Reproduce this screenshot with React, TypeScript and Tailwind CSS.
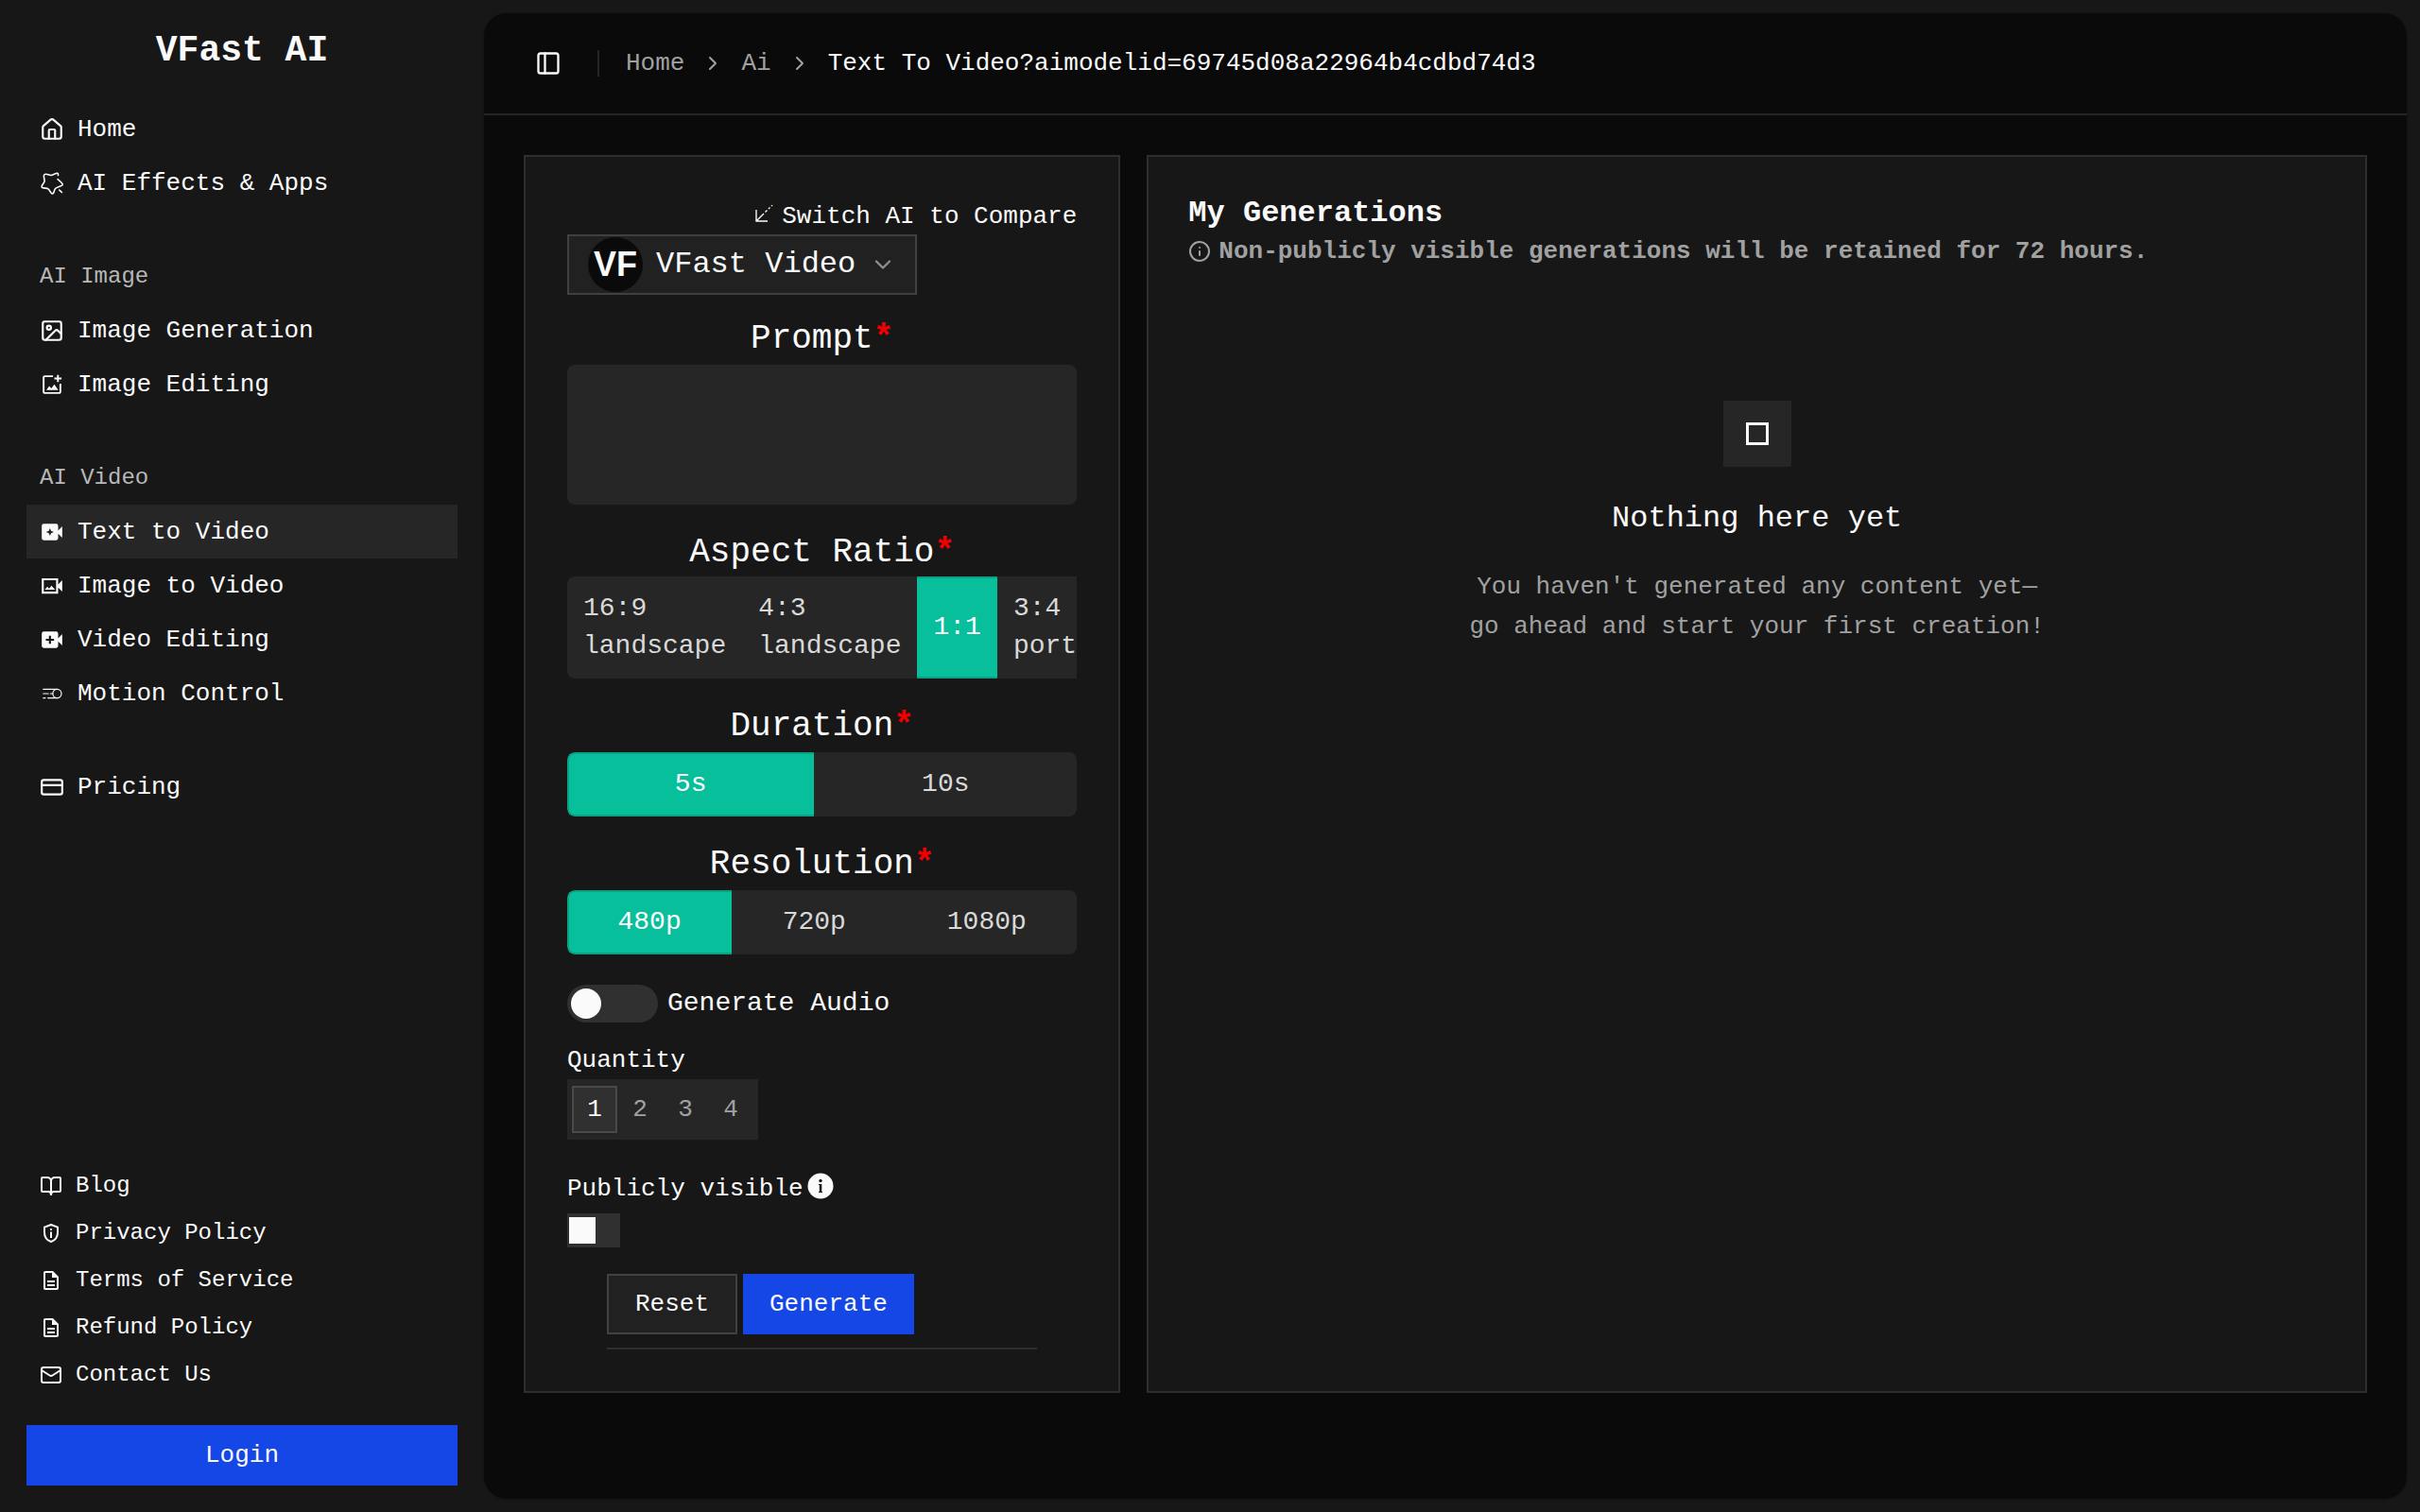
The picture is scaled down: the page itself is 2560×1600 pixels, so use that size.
import { useState, type ComponentType, type ReactNode } from "react";
import {
  BookOpen,
  ChevronDown,
  ChevronRight,
  CreditCard,
  House,
  Image,
  Info,
  Mail,
  PanelLeft,
} from "lucide-react";
import { MdOutlineDescription } from "react-icons/md";

type Icon = ComponentType<{ className?: string }>;

type NavEntry = {
  label: string;
  icon: Icon;
  active?: boolean;
};

function EffectsIcon({ className }: { className?: string }) {
  return (
    <svg
      viewBox="0 0 24 24"
      fill="none"
      stroke="currentColor"
      strokeWidth="1.5"
      strokeLinecap="round"
      strokeLinejoin="round"
      className={className}
    >
      <path d="M18 4.200c.2-1.900-.600-2.600-2.100-1.900l-3.800 1.600c-.700.300-1.300.300-2 .100L7.200 3.200C5 2.700 3.900 3.500 4 5.500l.700 3.500c.1.700 0 1.300-.4 1.900l-2 3.200c-.8 1.400-.3 2.200 1.300 2.400l3.600.5c.7.100 1.200.400 1.600.9l2.300 3.300c1 1.300 2 1.200 2.600-.3l1-2.900c.300-.700.700-1.200 1.400-1.500l5-2.100c1.500-.700 1.700-1.600.6-2.600L17.600 7.900" />
      <path d="m19.200 18.500 2.400 2.300" />
    </svg>
  );
}

function ImageEditIcon({ className }: { className?: string }) {
  return (
    <svg viewBox="0 0 24 24" fill="none" stroke="currentColor" strokeWidth="1.8" className={className}>
      <path d="M13 3.800H5a1.200 1.200 0 0 0-1.200 1.200v14A1.200 1.200 0 0 0 5 20.200h14a1.200 1.200 0 0 0 1.200-1.200v-8" />
      <path d="M17.800 2.500v7M14.300 6h7" />
      <path d="M6.500 17.300 9.300 13.400l2 2.300 3-4 3.800 5.600z" fill="currentColor" stroke="none" />
    </svg>
  );
}

function VideoSparkIcon({ className }: { className?: string }) {
  return (
    <svg viewBox="0 0 24 24" fill="currentColor" fillRule="evenodd" className={className}>
      <path d="M4 4h12a2 2 0 0 1 2 2v4.500l4-4v11l-4-4V18a2 2 0 0 1-2 2H4a2 2 0 0 1-2-2V6a2 2 0 0 1 2-2ZM10 8.200l-1.100 2.700L6.200 12l2.700 1.100L10 15.800l1.100-2.700 2.700-1.100-2.700-1.100Z" />
    </svg>
  );
}

function VideoPlusIcon({ className }: { className?: string }) {
  return (
    <svg viewBox="0 0 24 24" fill="currentColor" fillRule="evenodd" className={className}>
      <path d="M4 4h12a2 2 0 0 1 2 2v4.500l4-4v11l-4-4V18a2 2 0 0 1-2 2H4a2 2 0 0 1-2-2V6a2 2 0 0 1 2-2ZM9 8v3H6v2h3v3h2v-3h3v-2h-3V8Z" />
    </svg>
  );
}

function VideoImageIcon({ className }: { className?: string }) {
  return (
    <svg viewBox="0 0 24 24" fill="currentColor" fillRule="evenodd" className={className}>
      <path d="M2 4.500h16v6l4-4v11l-4-4v6H2ZM4 6.500v11h12v-11Z" />
      <path d="m5 15.800 2.500-3.200 1.700 2.200 2.300-3 3.500 4Z" />
    </svg>
  );
}

function MotionIcon({ className }: { className?: string }) {
  return (
    <svg
      viewBox="0 0 24 24"
      fill="none"
      stroke="currentColor"
      strokeWidth="1.100"
      strokeLinecap="round"
      className={className}
    >
      <circle cx="17" cy="12" r="4.200" />
      <path d="M3.500 7.800H17M3.500 12h5M10.500 12h2M3.500 16.200h2M8 16.200h9" />
    </svg>
  );
}

function ShieldInfoIcon({ className }: { className?: string }) {
  return (
    <svg
      viewBox="0 0 24 24"
      fill="none"
      stroke="currentColor"
      strokeWidth="2"
      strokeLinejoin="round"
      className={className}
    >
      <path d="M12 3l7 2.600v5.600c0 4.600-3 8.300-7 9.800-4-1.500-7-5.200-7-9.800V5.600Z" />
      <path d="M12 7v2M12 10.500v6.500" />
    </svg>
  );
}

function CompareIcon({ className }: { className?: string }) {
  return (
    <svg viewBox="0 0 24 24" fill="none" stroke="currentColor" strokeWidth="1.400" className={className}>
      <path d="M5 5v12h12M5 17l8-8M14.500 7.500l2-2M18 4l1.500-1.500M21 1l1-1" />
    </svg>
  );
}

function InfoFilledIcon({ className }: { className?: string }) {
  return (
    <svg viewBox="0 0 28 28" className={className}>
      <circle cx="14" cy="14" r="13.500" fill="#fafafa" />
      <circle cx="14" cy="8.500" r="1.700" fill="#171717" />
      <path d="M12 12h3.300v8h.700v1h-4v-1h.800v-7H12Z" fill="#171717" />
    </svg>
  );
}

const topNav: NavEntry[] = [
  { label: "Home", icon: House },
  { label: "AI Effects & Apps", icon: EffectsIcon },
];

const imageNav: NavEntry[] = [
  { label: "Image Generation", icon: Image },
  { label: "Image Editing", icon: ImageEditIcon },
];

const videoNav: NavEntry[] = [
  { label: "Text to Video", icon: VideoSparkIcon, active: true },
  { label: "Image to Video", icon: VideoImageIcon },
  { label: "Video Editing", icon: VideoPlusIcon },
  { label: "Motion Control", icon: MotionIcon },
];

const footerNav: NavEntry[] = [
  { label: "Blog", icon: BookOpen },
  { label: "Privacy Policy", icon: ShieldInfoIcon },
  { label: "Terms of Service", icon: MdOutlineDescription },
  { label: "Refund Policy", icon: MdOutlineDescription },
  { label: "Contact Us", icon: Mail },
];

function NavGroup({ title, items }: { title?: string; items: NavEntry[] }) {
  return (
    <div>
      {title && (
        <h2 className="flex h-[57px] items-center px-3.5 text-[24px] text-[#b8b8b8]">{title}</h2>
      )}
      <ul>
        {items.map(({ label, icon: ItemIcon, active }) => (
          <li key={label}>
            <a
              href="#"
              className={
                active
                  ? "flex h-[57px] items-center gap-3.5 bg-[#262626] px-3.5"
                  : "flex h-[57px] items-center gap-3.5 px-3.5"
              }
            >
              <ItemIcon className="size-[26px] shrink-0" />
              {label}
            </a>
          </li>
        ))}
      </ul>
    </div>
  );
}

function Sidebar() {
  return (
    <aside className="flex w-[512px] shrink-0 flex-col px-7 pb-7">
      <div className="flex h-[108px] items-center justify-center text-[38px] font-bold">VFast AI</div>
      <nav className="flex flex-col gap-[42px]">
        <NavGroup items={topNav} />
        <NavGroup title="AI Image" items={imageNav} />
        <NavGroup title="AI Video" items={videoNav} />
        <NavGroup items={[{ label: "Pricing", icon: CreditCard }]} />
      </nav>
      <ul className="mt-auto mb-7 text-[24px]">
        {footerNav.map(({ label, icon: ItemIcon }) => (
          <li key={label}>
            <a href="#" className="flex h-[50px] items-center gap-3.5 px-3.5">
              <ItemIcon className="size-6 shrink-0" />
              {label}
            </a>
          </li>
        ))}
      </ul>
      <button type="button" className="h-16 shrink-0 bg-[#1447e6]">
        Login
      </button>
    </aside>
  );
}

function TopBar() {
  return (
    <header className="flex h-[108px] shrink-0 items-center border-b-2 border-[#262626] px-[54px]">
      <button type="button" aria-label="Toggle sidebar">
        <PanelLeft className="size-7" />
      </button>
      <span className="mr-7 ml-[38px] h-7 w-0.5 bg-[#262626]" />
      <nav className="flex items-center gap-[18px] text-[#a1a1a1]">
        <a href="#">Home</a>
        <ChevronRight className="size-6" />
        <a href="#">Ai</a>
        <ChevronRight className="size-6" />
        <span className="text-[#fafafa]">Text To Video?aimodelid=69745d08a22964b4cdbd74d3</span>
      </nav>
    </header>
  );
}

function FieldTitle({ children }: { children: ReactNode }) {
  return (
    <>
      {children}
      <span className="font-bold text-[#f00000]">*</span>
    </>
  );
}

type ChoiceProps = {
  title: string;
  name: string;
  options: string[];
  initial: string;
  scroll?: boolean;
};

function ChoiceField({ title, name, options, initial, scroll }: ChoiceProps) {
  const [value, setValue] = useState(initial);

  return (
    <fieldset className="mt-[26px] min-w-0">
      <legend className="w-full text-center text-[36px] leading-[50px]">
        <FieldTitle>{title}</FieldTitle>
      </legend>
      <div
        className={
          (scroll ? "" : "mt-0.5 ") +
          "flex overflow-hidden rounded-l-lg text-[28px] leading-10 text-[#d9d9d9]"
        }
      >
        {options.map((option) => (
          <label
            key={option}
            className={
              (scroll ? "shrink-0 " : "flex-auto justify-center last:rounded-r-lg ") +
              (option === value
                ? "flex items-center border-y-2 border-[#0aa283] bg-[#07bf9b] px-[17px] py-3 text-white first:rounded-l-lg first:border-l-2 first:pl-[15px]"
                : "flex items-center bg-[#262626] px-[17px] py-3.5")
            }
          >
            <input
              type="radio"
              name={name}
              value={option}
              checked={option === value}
              onChange={() => setValue(option)}
              className="sr-only"
            />
            <span className="whitespace-pre-line">{scroll ? option.replace(" ", "\n") : option}</span>
          </label>
        ))}
      </div>
    </fieldset>
  );
}

function QuantityField() {
  const [quantity, setQuantity] = useState(1);

  return (
    <fieldset className="mt-5">
      <legend className="leading-10">Quantity</legend>
      <div className="flex h-16 w-fit items-center bg-[#262626] px-[5px]">
        {[1, 2, 3, 4].map((n) => (
          <label
            key={n}
            className={
              n === quantity
                ? "flex h-[50px] w-12 items-center justify-center border-2 border-[#4a4a4a] bg-[#303030] shadow-sm"
                : "flex h-[50px] w-12 items-center justify-center text-[#a1a1a1]"
            }
          >
            <input
              type="radio"
              name="quantity"
              checked={n === quantity}
              onChange={() => setQuantity(n)}
              className="sr-only"
            />
            {n}
          </label>
        ))}
      </div>
    </fieldset>
  );
}

function GenerateForm() {
  return (
    <form
      onSubmit={(e) => e.preventDefault()}
      className="min-w-0 border-2 border-[#2e2e2e] bg-[#171717] px-11 pt-11 pb-11"
    >
      <a href="#" className="flex h-[38px] items-center justify-end gap-2">
        <CompareIcon className="size-6" />
        Switch AI to Compare
      </a>
      <div className="flex h-16 w-fit items-center gap-3.5 border-2 border-[#404040] bg-[#212121] px-5">
        <span className="flex size-[58px] items-center justify-center rounded-full bg-[#0a0a0a] font-['Liberation_Sans',sans-serif] text-[36px] font-bold">
          VF
        </span>
        <select aria-label="AI model" className="appearance-none bg-transparent text-[32px]">
          <option>VFast Video</option>
        </select>
        <ChevronDown className="size-7 text-[#8f8f8f]" />
      </div>

      <div className="mt-[22px]">
        <label htmlFor="prompt" className="block text-center text-[36px] leading-[50px]">
          <FieldTitle>Prompt</FieldTitle>
        </label>
        <textarea
          id="prompt"
          className="mt-0.5 block h-[148px] w-full resize-none rounded-lg bg-[#262626] p-4 outline-none"
        />
      </div>

      <ChoiceField
        title="Aspect Ratio"
        name="ratio"
        options={["16:9 landscape", "4:3 landscape", "1:1", "3:4 portrait"]}
        initial="1:1"
        scroll
      />
      <ChoiceField title="Duration" name="duration" options={["5s", "10s"]} initial="5s" />
      <ChoiceField title="Resolution" name="resolution" options={["480p", "720p", "1080p"]} initial="480p" />

      <label className="mt-8 flex h-10 w-fit items-center gap-2.5 text-[28px]">
        <input type="checkbox" role="switch" className="peer sr-only" />
        <span className="flex h-10 w-24 items-center rounded-full bg-[#303030] px-1 peer-checked:justify-end">
          <span className="size-8 rounded-full bg-[#fafafa]" />
        </span>
        Generate Audio
      </label>

      <QuantityField />

      <div className="mt-8">
        <div className="flex h-10 items-center gap-1">
          <label htmlFor="visible">Publicly visible</label>
          <InfoFilledIcon className="mb-1.5 size-7" />
        </div>
        <label className="mt-1.5 flex h-9 w-14 items-center bg-[#303030] px-0.5 has-checked:justify-end">
          <input id="visible" type="checkbox" role="switch" className="sr-only" />
          <span className="size-7 bg-[#fafafa]" />
        </label>
      </div>

      <div className="mx-[42px] mt-7 flex gap-1.5 border-b-2 border-[#2e2e2e] pb-3.5">
        <button type="reset" className="h-16 border-2 border-[#424242] bg-[#212121] px-7">
          Reset
        </button>
        <button type="submit" className="h-16 bg-[#1447e6] px-7">
          Generate
        </button>
      </div>
    </form>
  );
}

function Generations() {
  return (
    <section className="min-w-0 border-2 border-[#2e2e2e] bg-[#171717] px-[42px] py-10">
      <h1 className="text-[32px] leading-10 font-bold">My Generations</h1>
      <p className="flex items-center gap-2 leading-10 font-bold text-[#a1a1a1]">
        <Info className="size-6 shrink-0" />
        Non-publicly visible generations will be retained for 72 hours.
      </p>
      <div className="mt-[138px] flex flex-col items-center text-center">
        <div className="flex h-[70px] w-[72px] items-center justify-center bg-[#262626]">
          <span className="size-6 border-3 border-[#fafafa]" />
        </div>
        <h2 className="mt-8 text-[32px] leading-[46px]">Nothing here yet</h2>
        <p className="mt-7 leading-[42px] text-[#a1a1a1]">
          You haven't generated any content yet—
          <br />
          go ahead and start your first creation!
        </p>
      </div>
    </section>
  );
}

export default function App() {
  return (
    <div className="flex min-h-screen bg-[#171717] font-['Liberation_Mono',monospace] text-[26px] leading-9 text-[#fafafa]">
      <Sidebar />
      <main className="my-3.5 mr-3.5 min-w-0 flex-1 rounded-[24px] bg-[#0a0a0a] shadow-sm">
        <TopBar />
        <div className="grid grid-cols-3 gap-7 p-[42px]">
          <GenerateForm />
          <div className="col-span-2 grid">
            <Generations />
          </div>
        </div>
      </main>
    </div>
  );
}
